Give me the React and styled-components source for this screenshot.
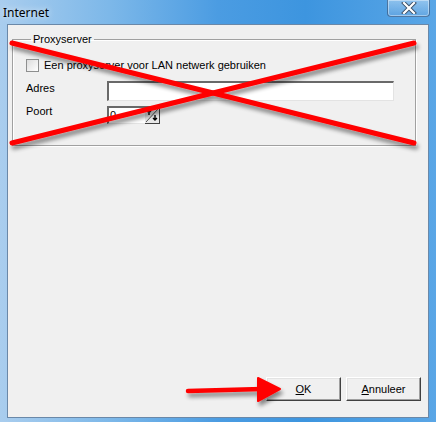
import React from 'react';
import styled, { createGlobalStyle } from 'styled-components';

const Global = createGlobalStyle`
  html, body { margin: 0; padding: 0; background: #ffffff; }
  body { font-family: "Liberation Sans", Arial, sans-serif; }
`;

export default function App() {
  return (
    <>
      <Global />
      <Window>
        <TitleBar>
          <Title>Internet</Title>
          <CloseButton>
            <svg width="16" height="12" viewBox="0 0 16 12">
              <path d="M3 1 L13 11 M13 1 L3 11" stroke="#3a4e66" strokeWidth="4" strokeLinecap="square" />
              <path d="M3 1 L13 11 M13 1 L3 11" stroke="#ffffff" strokeWidth="2.2" strokeLinecap="square" />
            </svg>
          </CloseButton>
        </TitleBar>
        <Client>
          <GroupBox>
            <Legend>Proxyserver</Legend>
            <CheckRow>
              <CheckBox />
              <span>Een proxyserver voor LAN netwerk gebruiken</span>
            </CheckRow>
            <FieldRow $gap={8}>
              <FieldLabel $pad={1}>Adres</FieldLabel>
              <TextInput $width={287} />
            </FieldRow>
            <FieldRow $gap={5}>
              <FieldLabel $pad={-1}>Poort</FieldLabel>
              <SpinBox>
                <SpinText>0</SpinText>
                <SpinButton>
                  <svg width="14" height="15" viewBox="0 0 14 15">
                    <path d="M1 14 L13 1" stroke="#555" strokeWidth="1" />
                    <path d="M4 2 L4 7 M2 4 L4 2 L6 4" stroke="#000" strokeWidth="1.4" fill="none" />
                    <path d="M10 7 L10 12 M8 10 L10 12 L12 10" stroke="#000" strokeWidth="1.4" fill="none" />
                  </svg>
                </SpinButton>
              </SpinBox>
            </FieldRow>
          </GroupBox>
          <Spacer />
          <ButtonRow>
            <Button><u>O</u>K</Button>
            <Button><u>A</u>nnuleer</Button>
          </ButtonRow>
          <Overlay width="420" height="394" viewBox="0 0 420 394">
            <defs>
              <filter id="shadow" x="-10%" y="-10%" width="120%" height="140%">
                <feGaussianBlur in="SourceAlpha" stdDeviation="2" />
                <feOffset dx="2" dy="4" result="b" />
                <feComponentTransfer><feFuncA type="linear" slope="0.45" /></feComponentTransfer>
                <feMerge><feMergeNode /><feMergeNode in="SourceGraphic" /></feMerge>
              </filter>
            </defs>
            <g filter="url(#shadow)" stroke="#ff0000" strokeWidth="5" strokeLinecap="round">
              <line x1="4" y1="18" x2="406" y2="118" />
              <line x1="4" y1="118" x2="406" y2="18" />
              <line x1="180" y1="366" x2="254" y2="364" strokeWidth="4.5" />
              <path d="M250 353 L272 364 L250 376 Z" fill="#ff0000" strokeWidth="2" strokeLinejoin="round" />
            </g>
          </Overlay>
        </Client>
      </Window>
    </>
  );
}

const Window = styled.div`
  width: 436px;
  height: 422px;
  display: flex;
  flex-direction: column;
  box-sizing: border-box;
  padding: 0 7px 4px 7px;
  background: linear-gradient(90deg, #a9cdee 0%, #7db8e9 25%, #4b9ce2 50%, #3d95df 70%, #5aa6e6 100%);
`;

const TitleBar = styled.div`
  height: 24px;
  display: flex;
  align-items: flex-start;
  justify-content: space-between;
`;

const Title = styled.div`
  margin: 4px 0 0 -4px;
  font-family: "Noto Sans", "DejaVu Sans", sans-serif;
  font-size: 12px;
  color: #000;
  text-shadow: 0 0 6px rgba(255, 255, 255, 0.9);
`;

const CloseButton = styled.div`
  width: 43px;
  height: 17px;
  margin-right: -1px;
  box-sizing: border-box;
  border: 1px solid rgba(40, 70, 110, 0.6);
  border-top: none;
  border-radius: 0 0 4px 4px;
  background: linear-gradient(180deg, rgba(255,255,255,0.35), rgba(120,170,220,0.3));
  box-shadow: inset 0 0 0 1px rgba(255,255,255,0.4);
  display: flex;
  align-items: center;
  justify-content: center;
`;

const Client = styled.div`
  position: relative;
  flex: 1;
  display: flex;
  flex-direction: column;
  background: #f0f0f0;
  border: 1px solid #6a88a8;
  padding: 8px 12px 16px 4px;
  font-size: 11px;
  color: #000;
`;

const GroupBox = styled.fieldset`
  margin: 0;
  height: 113px;
  box-sizing: border-box;
  border: 1px solid #a0a0a0;
  box-shadow: inset 1px 1px 0 #fff, 1px 1px 0 #fff;
  padding: 2px 10px 0 13px;
  display: flex;
  flex-direction: column;
`;

const Legend = styled.legend`
  padding: 0 2px;
  margin-left: 5px;
  font-size: 11px;
`;

const CheckRow = styled.div`
  display: flex;
  align-items: center;
  gap: 5px;
  margin-top: 10px;
  height: 16px;
`;

const CheckBox = styled.div`
  width: 11px;
  height: 11px;
  border: 1px solid #8e8f8f;
  background: linear-gradient(135deg, #dcdcdc, #fff);
`;

const FieldRow = styled.div`
  display: flex;
  align-items: flex-start;
  margin-top: ${p => p.$gap}px;
`;

const FieldLabel = styled.div`
  width: 81px;
  line-height: 13px;
  margin-top: ${p => p.$pad}px;
`;

const TextInput = styled.div`
  width: ${p => p.$width}px;
  height: 20px;
  box-sizing: border-box;
  background: #fff;
  border-top: 2px solid #696969;
  border-left: 2px solid #696969;
  border-right: 1px solid #e3e3e3;
  border-bottom: 1px solid #e3e3e3;
`;

const SpinBox = styled.div`
  width: 53px;
  height: 18px;
  display: flex;
  box-sizing: border-box;
  background: #fff;
  border-top: 2px solid #696969;
  border-left: 2px solid #696969;
  border-bottom: 1px solid #e3e3e3;
`;

const SpinText = styled.div`
  flex: 1;
  padding-left: 1px;
  line-height: 15px;
`;

const SpinButton = styled.div`
  width: 15px;
  height: 16px;
  box-sizing: border-box;
  background: #e8e8e8;
  border-right: 1px solid #404040;
  border-bottom: 1px solid #404040;
  margin-bottom: -1px;
  display: flex;
`;

const Spacer = styled.div`
  flex: 1;
`;

const ButtonRow = styled.div`
  display: flex;
  justify-content: flex-end;
  gap: 5px;
  margin-right: -5px;
`;

const Button = styled.div`
  width: 75px;
  height: 24px;
  box-sizing: border-box;
  display: flex;
  align-items: center;
  justify-content: center;
  background: #f0f0f0;
  border-top: 1px solid #fff;
  border-left: 1px solid #fff;
  border-right: 1px solid #404040;
  border-bottom: 1px solid #404040;
  box-shadow: inset -1px -1px 0 #a0a0a0, inset 1px 1px 0 #e3e3e3;
  font-size: 11px;
`;

const Overlay = styled.svg`
  position: absolute;
  left: 0;
  top: 0;
  pointer-events: none;
  overflow: visible;
`;
